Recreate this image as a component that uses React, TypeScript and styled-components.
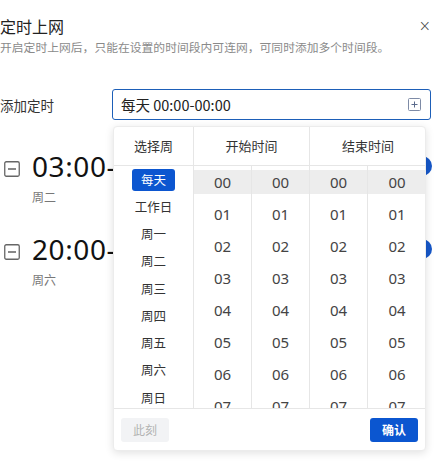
import React from "react";
import styled, { createGlobalStyle } from "styled-components";

const Global = createGlobalStyle`
  html, body { margin: 0; padding: 0; background: #fff; }
  body { font-family: "Noto Sans CJK SC", "Noto Sans", sans-serif; color: #333; }
  * { box-sizing: border-box; }
`;

const Page = styled.div`
  width: 445px;
  height: 475px;
  position: relative;
  overflow: hidden;
`;

const TitleRow = styled.div`
  display: flex;
  justify-content: space-between;
  align-items: center;
  height: 24px;
  margin-top: 14px;
  padding-right: 14px;
`;

const Title = styled.div`
  font-size: 16px;
  color: #222;
  line-height: 24px;
`;

const Close = styled.div`
  font-size: 15px;
  color: #444;
  line-height: 24px;
  font-family: "DejaVu Sans", sans-serif;
  font-weight: 300;
`;

const Subtitle = styled.div`
  font-size: 11.8px;
  color: #8a8a8a;
  line-height: 16px;
  margin-top: 1px;
`;

const FormRow = styled.div`
  display: flex;
  align-items: center;
  margin-top: 34px;
  height: 31px;
`;

const Label = styled.div`
  width: 112px;
  font-size: 13.5px;
  color: #333;
`;

const FieldWrap = styled.div`
  position: relative;
  width: 319px;
  height: 31px;
`;

const Input = styled.div`
  height: 31px;
  border: 1px solid #1d5fb8;
  border-radius: 3px;
  display: flex;
  align-items: center;
  justify-content: space-between;
  padding: 0 9px 0 8px;
  font-size: 14.5px;
  color: #222;
`;

const RuleList = styled.div`
  margin-top: 29px;
  display: flex;
  flex-direction: column;
  gap: 26.5px;
`;

const Rule = styled.div`
  display: flex;
  align-items: flex-start;
  padding-left: 4px;
  padding-right: 13px;
  height: 56px;
`;

const RuleBody = styled.div`
  flex: 1;
  margin-left: 12px;
  display: flex;
  flex-direction: column;
`;

const RuleTop = styled.div`
  display: flex;
  justify-content: space-between;
  align-items: center;
`;

const RuleTime = styled.div`
  font-size: 28px;
  letter-spacing: 0.6px;
  line-height: 34px;
  color: #111;
  font-family: "Noto Sans", "Noto Sans CJK SC", sans-serif;
`;

const RuleDays = styled.div`
  font-size: 12px;
  color: #777;
  margin-top: 5px;
`;

const IconBox = styled.div`
  margin-top: 9px;
  width: 16px;
  height: 16px;
  flex: none;
`;

const Switch = styled.div`
  width: 40px;
  height: 20px;
  border-radius: 10px;
  background: #1657c8;
`;

const Dropdown = styled.div`
  position: absolute;
  top: 37px;
  left: 1px;
  width: 313px;
  height: 325px;
  background: #fff;
  border: 1px solid #ececec;
  border-radius: 4px;
  box-shadow: 0 2px 8px rgba(0, 0, 0, 0.12);
  display: flex;
  flex-direction: column;
  overflow: hidden;
  z-index: 10;
`;

const HeadRow = styled.div`
  display: grid;
  grid-template-columns: 80px 116px 116px;
  height: 39px;
  border-bottom: 1px solid #e6e6e6;
`;

const HeadCell = styled.div<{ $last?: boolean }>`
  display: flex;
  align-items: center;
  justify-content: center;
  font-size: 13px;
  color: #333;
  border-right: ${(p) => (p.$last ? "none" : "1px solid #e6e6e6")};
`;

const Body = styled.div`
  display: grid;
  grid-template-columns: 80px 58px 58px 58px 58px;
  height: 244px;
  overflow: hidden;
`;

const WeekCol = styled.div`
  border-right: 1px solid #e6e6e6;
  display: flex;
  flex-direction: column;
  padding-top: 0.5px;
`;

const WeekItem = styled.div<{ $active?: boolean }>`
  height: 27.25px;
  display: flex;
  align-items: center;
  justify-content: center;
  flex: none;
  span {
    display: inline-flex;
    align-items: center;
    justify-content: center;
    width: 43px;
    height: 22px;
    border-radius: 3px;
    font-size: 12.5px;
    line-height: 1;
    color: ${(p) => (p.$active ? "#fff" : "#333")};
    background: ${(p) => (p.$active ? "#0c56d0" : "transparent")};
  }
`;

const HourCol = styled.div<{ $last?: boolean }>`
  border-right: ${(p) => (p.$last ? "none" : "1px solid #e6e6e6")};
  display: flex;
  flex-direction: column;
  padding-top: 4px;
`;

const HourItem = styled.div<{ $active?: boolean }>`
  height: 24px;
  margin-bottom: 8px;
  flex: none;
  display: flex;
  align-items: center;
  justify-content: center;
  font-size: 15px;
  color: #444;
  font-family: "Noto Sans", "Noto Sans CJK SC", sans-serif;
  background: ${(p) => (p.$active ? "#ededed" : "transparent")};
`;

const Footer = styled.div`
  border-top: 1px solid #e6e6e6;
  height: 42px;
  display: flex;
  align-items: center;
  justify-content: space-between;
  padding: 0 7px;
`;

const Btn = styled.div<{ $primary?: boolean }>`
  width: 48px;
  height: 24px;
  border-radius: 3px;
  display: flex;
  align-items: center;
  justify-content: center;
  font-size: 12px;
  font-weight: ${(p) => (p.$primary ? 700 : 400)};
  color: ${(p) => (p.$primary ? "#fff" : "#b3b3b3")};
  background: ${(p) => (p.$primary ? "#0b56d0" : "#f2f3f5")};
`;

const PlusSquare = () => (
  <svg width="13" height="13" viewBox="0 0 13 13">
    <rect x="0.5" y="0.5" width="12" height="12" rx="1" fill="none" stroke="#7e8ba6" strokeWidth="1" />
    <path d="M6.5 3.5v6M3.5 6.5h6" stroke="#5b6b8c" strokeWidth="1" />
  </svg>
);

const MinusSquare = () => (
  <svg width="16" height="16" viewBox="0 0 16 16">
    <rect x="0.75" y="0.75" width="14.5" height="14.5" rx="1.5" fill="none" stroke="#666" strokeWidth="1.3" />
    <path d="M4 8h8" stroke="#555" strokeWidth="1.4" />
  </svg>
);

const weeks = ["每天", "工作日", "周一", "周二", "周三", "周四", "周五", "周六", "周日"];
const hours = ["00", "01", "02", "03", "04", "05", "06", "07"];

export default function App() {
  return (
    <Page>
      <Global />
      <TitleRow>
        <Title>定时上网</Title>
        <Close>×</Close>
      </TitleRow>
      <Subtitle>开启定时上网后，只能在设置的时间段内可连网，可同时添加多个时间段。</Subtitle>
      <FormRow>
        <Label>添加定时</Label>
        <FieldWrap>
          <Input>
            <span>每天 00:00-00:00</span>
            <PlusSquare />
          </Input>
          <Dropdown>
            <HeadRow>
              <HeadCell>选择周</HeadCell>
              <HeadCell>开始时间</HeadCell>
              <HeadCell $last>结束时间</HeadCell>
            </HeadRow>
            <Body>
              <WeekCol>
                {weeks.map((w, i) => (
                  <WeekItem key={w} $active={i === 0}>
                    <span>{w}</span>
                  </WeekItem>
                ))}
              </WeekCol>
              {[0, 1, 2, 3].map((c) => (
                <HourCol key={c} $last={c === 3}>
                  {hours.map((h, i) => (
                    <HourItem key={h} $active={i === 0}>
                      {h}
                    </HourItem>
                  ))}
                </HourCol>
              ))}
            </Body>
            <Footer>
              <Btn>此刻</Btn>
              <Btn $primary>确认</Btn>
            </Footer>
          </Dropdown>
        </FieldWrap>
      </FormRow>
      <RuleList>
        <Rule>
          <IconBox>
            <MinusSquare />
          </IconBox>
          <RuleBody>
            <RuleTop>
              <RuleTime>03:00-04:00</RuleTime>
              <Switch />
            </RuleTop>
            <RuleDays>周二</RuleDays>
          </RuleBody>
        </Rule>
        <Rule>
          <IconBox>
            <MinusSquare />
          </IconBox>
          <RuleBody>
            <RuleTop>
              <RuleTime>20:00-22:00</RuleTime>
              <Switch />
            </RuleTop>
            <RuleDays>周六</RuleDays>
          </RuleBody>
        </Rule>
      </RuleList>
    </Page>
  );
}
